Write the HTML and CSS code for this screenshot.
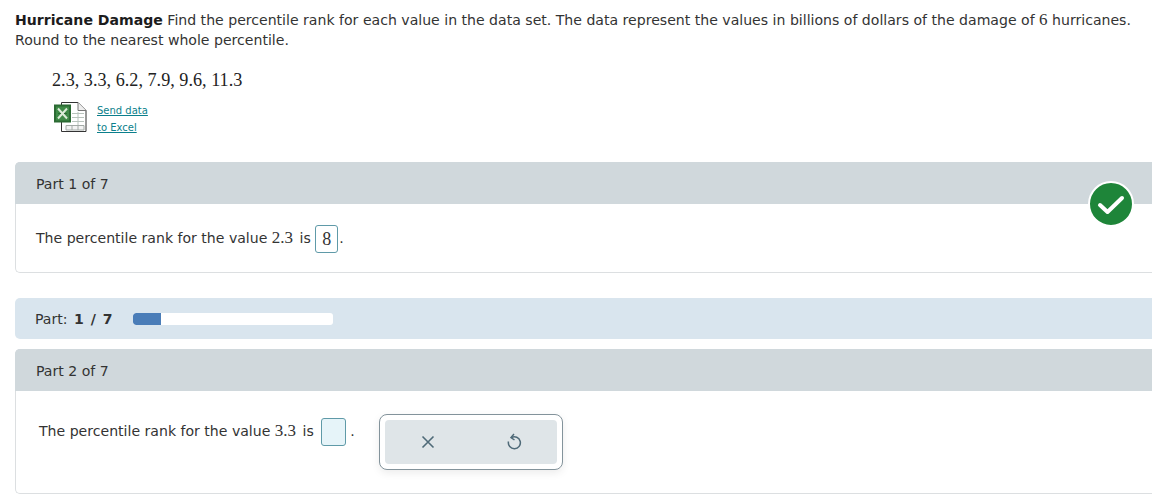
FILE: index.html
```html
<!DOCTYPE html>
<html lang="en">

<head>
    <meta charset="UTF-8">
    <meta name="viewport" content="width=device-width, initial-scale=1.0">

    <link rel="stylesheet" href="styles.css">

    <title>Hurricane Damage</title>
</head>

<body>
    <div class="container">
        <p class="question"><b>Hurricane Damage</b> Find the percentile rank for each value in the data set. The data represent the values in billions of dollars of the damage of <span class="math">6</span> hurricanes.<br>Round to the nearest whole percentile.</p>

        <div class="data">2.3, 3.3, 6.2, 7.9, 9.6, 11.3</div>

        <div class="excel">
            <svg class="excel_icon" width="34" height="32" viewBox="0 0 34 32">
                <path d="M7.500 1.500H24L32 9.500V30.500H7.500Z" fill="#fff" stroke="#333" />
                <path d="M24 1.500V9.500H32" fill="#eee" stroke="#777" />
                <path d="M18 12.500H30M18 16.500H30M18 20.500H30M24 11V24" stroke="#b9c4bd" fill="none" />
                <path d="M12 24.500H30V29H12ZM18 24.500V29M24 24.500V29" stroke="#a3aaa6" fill="#f3f3f3" />
                <rect x="1" y="4.500" width="15" height="16" fill="#3f8a47" stroke="#2b6a33" stroke-width="2" />
                <path d="M4 7.500L13 17.500M13 7.500L4 17.500" stroke="#dcebd8" stroke-width="2" fill="none" />
                <path d="M4 12.500H7M10 12.500H13" stroke="#2b6a33" fill="none" />
            </svg>
            <div class="excel_links">
                <a href="#">Send data</a>
                <a href="#">to Excel</a>
            </div>
        </div>

        <div class="part part_done">
            <div class="part_title">Part 1 of 7</div>
            <div class="part_body">
                The percentile rank for the value <span class="math">2.3</span> is <span class="answer">8</span><span class="dot">.</span>
            </div>
            <svg class="check" width="46" height="46" viewBox="0 0 46 46">
                <circle cx="23" cy="23" r="22" fill="#1e8539" stroke="#fff" stroke-width="2" />
                <path d="M12 24L19.500 31L34 17" fill="none" stroke="#fff" stroke-width="4" stroke-linecap="round" stroke-linejoin="round" />
            </svg>
        </div>

        <div class="progress">
            <span class="progress_label">Part: <b>1 / 7</b></span>
            <div class="bar">
                <div class="bar_fill" style="width: 14%"></div>
            </div>
        </div>

        <div class="part part_active">
            <div class="part_title">Part 2 of 7</div>
            <div class="part_body">
                The percentile rank for the value <span class="math">3.3</span> is <span class="answer answer_empty"></span><span class="dot">.</span>
            </div>
            <div class="tools">
                <div class="tools_inner">
                    <svg width="16" height="16" viewBox="0 0 16 16">
                        <path d="M2.500 2.500L13.500 13.500M13.500 2.500L2.500 13.500" stroke="#4f6a78" stroke-width="1.600" fill="none" />
                    </svg>
                    <svg width="16" height="18" viewBox="0 0 16 18">
                        <path d="M5.500 4.500A6 6 0 1 1 2.500 8.500" stroke="#4f6a78" stroke-width="1.500" fill="none" />
                        <path d="M8 1L5 4.500L8.500 7" stroke="#4f6a78" stroke-width="1.500" fill="none" />
                    </svg>
                </div>
            </div>
        </div>
    </div>
</body>

</html>
```

FILE: styles.css
```css
html,
body {
    margin: 0;
    height: 503px;
    overflow: hidden;
    background-color: #fff;
}

body {
    font-family: "DejaVu Sans", Verdana, sans-serif;
    font-size: 14.08px;
    color: #333;
}

.container {
    width: 1160px;
    padding: 10px 0 0 15px;
}

.question {
    margin: 0;
    width: 1125px;
    line-height: 20px;
}

.question b {
    color: #1c1c1c;
}

.math {
    font-family: "Liberation Serif", "Times New Roman", serif;
    font-size: 17px;
}

.data {
    margin: 18px 0 0 37px;
    font-family: "Liberation Serif", "Times New Roman", serif;
    font-size: 18.2px;
    line-height: 24px;
    color: #222;
}

.excel {
    display: flex;
    align-items: flex-start;
    margin: 9px 0 0 39px;
    height: 61px;
}

.excel_links {
    display: flex;
    flex-direction: column;
    align-items: flex-start;
    margin: 1px 0 0 9px;
    font-size: 10px;
    line-height: 17px;
}

.excel_links a {
    color: #0b7f8c;
}

.part {
    position: relative;
    box-sizing: border-box;
    border: 1px solid #dcdfe1;
    border-right: 0;
    border-radius: 5px 0 0 5px;
}

.part_title {
    height: 42px;
    margin: -1px 0 0 -1px;
    padding-left: 21px;
    line-height: 45px;
    background-color: #d0d8dc;
    border-radius: 5px 0 0 0;
}

.part_body {
    line-height: 28px;
}

.part_body .math {
    margin-right: 2px;
}

.part_done {
    height: 111px;
}

.part_done .part_body {
    padding: 20px 0 0 20px;
}

.part_active {
    height: 145px;
    margin-top: 10px;
}

.part_active .part_body {
    padding: 26px 0 0 23px;
}

.answer {
    display: inline-block;
    box-sizing: border-box;
    width: 23px;
    height: 28px;
    vertical-align: middle;
    border: 1px solid #5f9aa8;
    border-radius: 3px;
    font-family: "Liberation Serif", "Times New Roman", serif;
    font-size: 18px;
    line-height: 26px;
    text-align: center;
}

.answer_empty {
    width: 25px;
    margin-left: 3px;
    background-color: #e6f4f9;
}

.dot {
    margin-left: 1px;
}

.answer_empty + .dot {
    margin-left: 4px;
}

.check {
    position: absolute;
    top: 18px;
    right: 41px;
}

.progress {
    display: flex;
    align-items: center;
    height: 41px;
    margin-top: 25px;
    padding-left: 20px;
    background-color: #d9e5ee;
    border-radius: 5px 0 0 5px;
}

.progress_label {
    width: 98px;
}

.progress b {
    margin-left: 2px;
    word-spacing: 2px;
}

.bar {
    width: 200px;
    height: 12px;
    background-color: #fff;
    border-radius: 3px;
    overflow: hidden;
}

.bar_fill {
    height: 100%;
    background-color: #4a7db8;
    border-radius: 3px 0 0 3px;
}

.tools {
    position: absolute;
    top: 64px;
    left: 363px;
    box-sizing: border-box;
    width: 184px;
    height: 56px;
    padding: 5px;
    background-color: #fff;
    border: 1px solid #83939b;
    border-radius: 8px;
    box-shadow: 0 3px 8px rgba(0, 0, 0, 0.08);
}

.tools_inner {
    display: flex;
    justify-content: space-around;
    align-items: center;
    height: 100%;
    background-color: #dfe5e8;
    border-radius: 4px;
}
```
